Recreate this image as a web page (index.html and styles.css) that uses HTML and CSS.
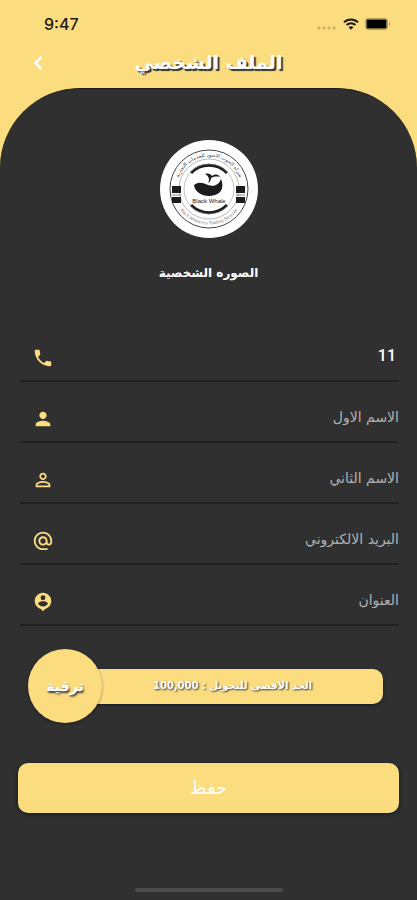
FILE: index.html
```html
<!DOCTYPE html>
<html lang="ar">
<head>
    <meta charset="UTF-8">
    <meta name="viewport" content="width=device-width, initial-scale=1.0">
    <title>الملف الشخصي</title>
    <link rel="stylesheet" href="styles.css">
</head>
<body>
    <div class="status-bar">
        <span class="time">9:47</span>
        <div class="status-icons">
            <svg width="20" height="4" viewBox="0 0 20 4" fill="#c9ad62">
                <circle cx="2" cy="2" r="1.5"/>
                <circle cx="7" cy="2" r="1.5"/>
                <circle cx="12" cy="2" r="1.5"/>
                <circle cx="17" cy="2" r="1.5"/>
            </svg>
            <svg width="16" height="12" viewBox="0 0 16 12" fill="none" stroke="#1d1a10" stroke-width="2">
                <path d="M1 4.4a10 10 0 0 1 14 0"/>
                <path d="M3.6 7a6.3 6.3 0 0 1 8.8 0"/>
                <path d="M8 11.8L5.6 9.3a3.5 3.5 0 0 1 4.8 0z" fill="#1d1a10" stroke="none"/>
            </svg>
            <svg width="26" height="12" viewBox="0 0 26 12">
                <rect x="0.5" y="0.5" width="22" height="11" rx="2.5" fill="none" stroke="#b59d5a"/>
                <rect x="1.5" y="1.5" width="20" height="9" rx="1" fill="#000"/>
                <path d="M24 4v4c1.6-.6 1.6-3.4 0-4z" fill="#b59d5a"/>
            </svg>
        </div>
    </div>

    <header class="header">
        <button type="button" class="back-btn" aria-label="رجوع">
            <svg width="12" height="16" viewBox="0 0 12 16" fill="none" stroke="#fff" stroke-width="2.5">
                <path d="M9.500 2L3.500 8l6 6"/>
            </svg>
        </button>
        <h1>الملف الشخصي</h1>
    </header>

    <main class="panel" dir="rtl">
        <div class="avatar">
            <svg viewBox="0 0 98 98" role="img" aria-label="Black Whale">
                <defs>
                    <path id="arcTop" d="M16.500 49a32.500 32.500 0 0 1 65 0"/>
                    <path id="arcBottom" d="M13.500 49a35.500 35.500 0 0 0 71 0"/>
                </defs>
                <circle cx="49" cy="49" r="49" fill="#fff"/>
                <circle cx="49" cy="49" r="39" fill="none" stroke="#444" stroke-width="1"/>
                <circle cx="49" cy="49" r="30" fill="none" stroke="#888" stroke-width="0.6"/>
                <path d="M12 46h9v7h-9zM12 57h9v6h-9zM76 46h9v7h-9zM76 57h9v6h-9z" fill="#1c1c1c"/>
                <path d="M12 55h9M76 55h9" stroke="#666" stroke-width="0.8"/>
                <path d="M31 33a25 25 0 0 1 36 0M31 65a25 25 0 0 0 36 0" fill="none" stroke="#1c1c1c" stroke-width="3"/>
                <circle cx="49" cy="49" r="25" fill="none" stroke="#999" stroke-width="0.6"/>
                <path d="M34 45c5-4 10-2 14 0 6 2 11 0 13-6 3 7 1 14-6 16-9 3-20-1-21-10z" fill="#1c1c1c"/>
                <path d="M48 43c2-3 1-7-3-9 3-1 6 0 7 2 3-2 6-2 8 1-4-1-7 0-9 1 0 2-1 4-3 5z" fill="#1c1c1c"/>
                <text x="49" y="63" class="logo-name">Black Whale</text>
                <text class="logo-arc" direction="rtl"><textPath href="#arcTop" startOffset="50%">شركة الحوت الاسود للخدمات التجارية</textPath></text>
                <text class="logo-arc logo-arc-en"><textPath href="#arcBottom" startOffset="50%">Black Whale For Trading Services</textPath></text>
            </svg>
        </div>
        <p class="avatar-label">الصوره الشخصية</p>

        <form class="profile-form">
            <div class="field">
                <input type="tel" class="phone" value="11" aria-label="رقم الهاتف">
                <svg viewBox="0 0 24 24"><path d="M6.620 10.790c1.440 2.830 3.760 5.140 6.590 6.590l2.200-2.200c.27-.27.67-.36 1.020-.24 1.120.37 2.330.57 3.570.57.550 0 1 .45 1 1V20c0 .55-.45 1-1 1-9.390 0-17-7.610-17-17 0-.55.450-1 1-1h3.500c.55 0 1 .45 1 1 0 1.250.2 2.450.57 3.570.11.350.03.74-.25 1.020l-2.200 2.200z"/></svg>
            </div>
            <div class="field">
                <input type="text" placeholder="الاسم الاول" aria-label="الاسم الاول">
                <svg viewBox="0 0 24 24"><path d="M12 12c2.210 0 4-1.790 4-4s-1.790-4-4-4-4 1.790-4 4 1.790 4 4 4zm0 2c-2.670 0-8 1.340-8 4v2h16v-2c0-2.660-5.330-4-8-4z"/></svg>
            </div>
            <div class="field">
                <input type="text" placeholder="الاسم الثاني" aria-label="الاسم الثاني">
                <svg viewBox="0 0 24 24"><path d="M12 5.900a2.100 2.100 0 1 1 0 4.200 2.100 2.100 0 0 1 0-4.200m0 9c2.970 0 6.100 1.460 6.100 2.100v1.100H5.900V17c0-.64 3.130-2.100 6.100-2.100M12 4C9.790 4 8 5.790 8 8s1.790 4 4 4 4-1.790 4-4-1.790-4-4-4zm0 9c-2.670 0-8 1.340-8 4v3h16v-3c0-2.660-5.330-4-8-4z"/></svg>
            </div>
            <div class="field">
                <input type="email" placeholder="البريد الالكتروني" aria-label="البريد الالكتروني">
                <svg viewBox="0 0 24 24"><path d="M12 1.950C6.480 1.950 2 6.430 2 11.950s4.480 10 10 10h5v-2h-5c-4.340 0-8-3.660-8-8s3.660-8 8-8 8 3.660 8 8v1.430c0 .79-.71 1.570-1.500 1.570s-1.500-.78-1.500-1.570v-1.430c0-2.760-2.240-5-5-5s-5 2.240-5 5 2.240 5 5 5c1.380 0 2.640-.56 3.540-1.470.65.890 1.770 1.470 2.960 1.470 1.970 0 3.500-1.600 3.500-3.570v-1.430c0-5.520-4.480-10-10-10zm0 13c-1.660 0-3-1.340-3-3s1.340-3 3-3 3 1.340 3 3-1.340 3-3 3z"/></svg>
            </div>
            <div class="field">
                <input type="text" placeholder="العنوان" aria-label="العنوان">
                <svg viewBox="0 0 24 24"><path d="M12 2C7.030 2 3 6.030 3 11c0 4.170 2.840 7.670 6.690 8.690L12 22l2.310-2.310C18.160 18.670 21 15.170 21 11c0-4.970-4.030-9-9-9zm0 2.700a2.700 2.700 0 1 1 0 5.400 2.700 2.700 0 0 1 0-5.400zm0 12.100c-2.250 0-4.230-1.150-5.400-2.900.03-1.790 3.600-2.770 5.400-2.770s5.370.98 5.400 2.770c-1.170 1.750-3.150 2.900-5.400 2.900z"/></svg>
            </div>

            <div class="limit">
                <p class="limit-bar">الحد الاقصى للتحويل : 100,000</p>
                <button type="button" class="upgrade-btn">ترقية</button>
            </div>

            <button type="submit" class="save-btn">حفظ</button>
        </form>

        <div class="home-indicator"></div>
    </main>
</body>
</html>
```
FILE: styles.css
```css
* {
    margin: 0;
    padding: 0;
    box-sizing: border-box;
    font-family: 'DejaVu Sans', sans-serif;
}

body {
    background: #fbdd80;
    min-height: 100vh;
    display: flex;
    flex-direction: column;
}

.status-bar {
    display: flex;
    justify-content: space-between;
    align-items: center;
    height: 48px;
    padding: 0 26px 0 44px;
}

.time {
    font-family: 'Inter', sans-serif;
    font-size: 16px;
    font-weight: 500;
    color: #1d1a10;
}

.status-icons {
    display: flex;
    align-items: center;
    gap: 6px;
}

.status-icons svg:first-child {
    margin-top: 8px;
}

.header {
    display: grid;
    grid-template-columns: 48px 1fr 48px;
    align-items: center;
    height: 40px;
    padding: 0 14px;
}

.header h1 {
    color: #fff;
    font-size: 19px;
    line-height: 28px;
    text-align: center;
    white-space: nowrap;
    padding-bottom: 12px;
    text-shadow: 2px 2px 1px #333;
}

.back-btn {
    background: none;
    border: none;
    height: 32px;
    padding-bottom: 10px;
    cursor: pointer;
}

.back-btn svg {
    display: block;
    margin: 0 auto;
}

.panel {
    flex: 1;
    display: flex;
    flex-direction: column;
    background: #303030;
    border-top: 1px solid #1c1c1c;
    border-radius: 80px 80px 0 0;
    padding: 51px 18px 8px;
}

.avatar {
    width: 98px;
    height: 98px;
    margin: 0 auto;
}

.logo-name {
    font-family: 'Liberation Sans', sans-serif;
    font-size: 6px;
    text-anchor: middle;
    fill: #222;
}

.logo-arc {
    font-size: 5px;
    text-anchor: middle;
    fill: #444;
}

.logo-arc-en {
    font-size: 4px;
    fill: #777;
}

.avatar-label {
    color: #fff;
    font-size: 12px;
    font-weight: bold;
    line-height: 20px;
    text-align: center;
    margin-top: 25px;
}

.profile-form {
    margin-top: 38px;
}

.field {
    display: flex;
    align-items: center;
    height: 61px;
    margin-left: 2px;
    padding: 14px 0 0 12px;
    border-bottom: 2px solid #212121;
}

.field input {
    flex: 1;
    min-width: 0;
    height: 36px;
    padding-bottom: 4px;
    background: none;
    border: none;
    outline: none;
    color: #fff;
    font-size: 14px;
    text-align: right;
}

.field input::placeholder {
    color: #b0b0b0;
    opacity: 1;
}

.field .phone {
    font-family: 'Roboto', sans-serif;
    font-size: 16px;
    font-weight: 500;
    padding-right: 3px;
}

.field svg {
    width: 22px;
    height: 22px;
    fill: #fbdd80;
}

.limit {
    display: flex;
    align-items: center;
    margin-top: 23px;
    padding: 0 16px 0 10px;
}

.limit-bar {
    flex: 1;
    height: 35px;
    margin-left: -12px;
    padding-right: 8px;
    background: #fbdd80;
    border-radius: 0 10px 10px 0;
    box-shadow: 0 1px 3px #111722;
    color: #fff;
    font-size: 10px;
    font-weight: bold;
    line-height: 34px;
    text-align: center;
    text-shadow: 1px 1px 2px #333;
}

.upgrade-btn {
    position: relative;
    width: 74px;
    height: 74px;
    border: none;
    border-radius: 50%;
    background: #fbdd80;
    box-shadow: 0 1px 3px rgba(0, 0, 0, 0.4);
    color: #fff;
    font-size: 14px;
    font-weight: bold;
    text-shadow: 1px 2px 2px #333;
    cursor: pointer;
}

.save-btn {
    display: block;
    width: 100%;
    height: 50px;
    margin-top: 40px;
    padding-bottom: 2px;
    border: none;
    border-radius: 10px;
    background: #fbdd80;
    box-shadow: 0 1px 4px #111722;
    color: #fff;
    font-size: 18px;
    cursor: pointer;
}

.home-indicator {
    width: 148px;
    height: 4px;
    margin: auto auto 0;
    border-radius: 2px;
    background: #4c4c4c;
}
```
